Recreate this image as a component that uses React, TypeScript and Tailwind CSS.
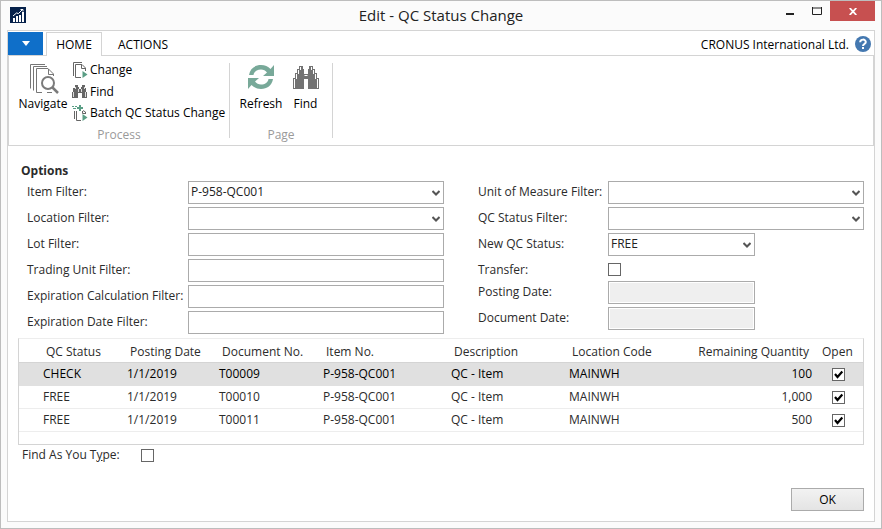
import React, { useId, useState } from 'react';

const FONT = "font-['Open_Sans','Noto_Sans',sans-serif]";

function AppLogo() {
  return (
    <svg width="16" height="16" viewBox="0 0 16 16" aria-hidden="true">
      <rect width="16" height="16" fill="#06214a" />
      <g fill="#fff">
        <rect x="3" y="11" width="2" height="4" />
        <rect x="6" y="9" width="2" height="6" />
        <rect x="9" y="8" width="2" height="7" />
        <rect x="12" y="5" width="2" height="10" />
      </g>
      <path d="M3 9 L6.5 6 L8.5 6.5 L12.5 2.5 M10.5 2.5 H13 V4.5" fill="none" stroke="#fff" strokeWidth="1" />
    </svg>
  );
}

function NavigateIcon() {
  return (
    <svg className="ml-[3px]" width="30" height="30" viewBox="0 0 30 30" fill="none" stroke="#767676" aria-hidden="true">
      <path d="M0.5 24.5 V0.5 H15 M3.5 26.5 V2.5 H17" />
      <path d="M12 28.5 H6.5 V4.5 H18 L23.5 10 V12 M18.5 5 V10.5 H23 M17 28.5 H22" />
      <circle cx="18" cy="19" r="6" stroke="#7b7b7b" strokeWidth="2" />
      <path d="M22.5 23.5 L28 29" stroke="#7b7b7b" strokeWidth="2.5" />
    </svg>
  );
}

function ChangeIcon() {
  return (
    <svg width="16" height="16" viewBox="0 0 16 16" fill="none" stroke="#666" aria-hidden="true">
      <path d="M1.5 14 V0.5 H10" />
      <path d="M9 15.5 H3.5 V2.5 H10 L13.5 6 V9 M9.5 3 V6.5 H13" />
      <path d="M10.5 9 L15.5 12.5 L10.5 16 Z" fill="#5a9e85" stroke="none" />
    </svg>
  );
}

function BatchIcon() {
  return (
    <svg width="16" height="16" viewBox="0 0 16 16" fill="none" stroke="#666" aria-hidden="true">
      <path d="M2.5 14 V6 M9 15.5 H4.5 V6 M11 5.5 L13.5 7 V9 M10.5 6 V8.5 H13" />
      <path d="M0 1.5 H2 M3 1.5 H5 M1 3.5 H4" stroke="#5a9e85" />
      <path d="M8 0 V6 M5 3 H11" stroke="#5a9e85" strokeWidth="2" />
      <path d="M10.5 9 L15.5 12.5 L10.5 16 Z" fill="#5a9e85" stroke="none" />
    </svg>
  );
}

function Binoculars() {
  return (
    <svg width="26" height="24" viewBox="0 0 26 24" aria-hidden="true">
      <path
        d="M6 0 H10 V3 H11 V8 H15 V3 H16 V0 H20 V3 H22 V7 H24 V12 H26 V23 H15 V13 H11 V23 H0 V12 H2 V7 H4 V3 H6 Z"
        fill="#737373"
      />
      <path
        d="M7.5 1 V4 M5.5 4 V8 M3.5 8 V13 M1.5 13 V22 M18.5 1 V4 M20.5 4 V8 M22.5 8 V13 M24.5 13 V22 M11.5 9.5 H14.5"
        stroke="#fff"
      />
    </svg>
  );
}

function SmallBinoculars() {
  return (
    <svg width="16" height="16" viewBox="0 0 16 16" aria-hidden="true">
      <path
        d="M3 1 H6 V3 H7 V5 H9 V3 H10 V1 H13 V4 H14 V8 H15 V14 H10 V9 H6 V14 H0 V8 H1 V4 H3 Z"
        fill="#666"
      />
      <path d="M3.5 3 V5 M1.5 8 V13 M12.5 3 V5 M13.5 8 V13 M6.5 5 V8 M9.5 5 V8" stroke="#ddd" />
    </svg>
  );
}

function RefreshIcon() {
  return (
    <svg width="26" height="26" viewBox="0 0 26 26" aria-hidden="true">
      <path d="M1 11 C2 4.5 7 1 13 1 C17 1 20 2.5 22.5 5 L26 1 V12 H15 L19 8.5 C17.5 6.8 15.5 5.5 13 5.5 C9 5.5 6 7.5 5.5 11 Z" fill="#78a999" />
      <path d="M25 15 C24 21.5 19 25 13 25 C9 25 6 23.5 3.5 21 L0 25 V14 H11 L7 17.5 C8.5 19.2 10.5 20.5 13 20.5 C17 20.5 20 18.5 20.5 15 Z" fill="#78a999" />
    </svg>
  );
}

function HelpIcon() {
  return (
    <svg width="16" height="16" viewBox="0 0 16 16" aria-hidden="true">
      <circle cx="8" cy="8" r="8" fill="#4478b0" />
      <path d="M5.2 6.2 C5.2 2.8 10.8 2.8 10.8 6 C10.8 8 8 8 8 10" fill="none" stroke="#fff" strokeWidth="2" />
      <rect x="7" y="11" width="2" height="2" fill="#fff" />
    </svg>
  );
}

const fieldBox = 'h-[23px] w-full appearance-none rounded-none border border-[#ababab] bg-white px-[2px] pb-[2px] text-xs leading-4 text-[#222] outline-none';

type FieldProps = {
  label: string;
  kind?: 'text' | 'select' | 'disabled';
  value?: string;
  labelClass: string;
  boxClass?: string;
};

function Field({ label, kind = 'text', value = '', labelClass, boxClass = 'flex-1' }: FieldProps) {
  const id = useId();
  return (
    <div className="flex h-[23px] items-center">
      <label htmlFor={id} className={`shrink-0 pb-[2px] whitespace-nowrap ${labelClass}`}>
        {label}
      </label>
      <div className={`relative ${boxClass}`}>
        {kind === 'select' ? (
          <>
            <select id={id} defaultValue={value} className={`${fieldBox} block`}>
              <option value={value}>{value}</option>
            </select>
            <svg className="pointer-events-none absolute top-[9px] right-[4px]" width="8" height="6" viewBox="0 0 8 6" aria-hidden="true">
              <path d="M0.5 1 L4 4.5 L7.5 1" fill="none" stroke="#555" strokeWidth="2" />
            </svg>
          </>
        ) : (
          <input
            id={id}
            type="text"
            defaultValue={value}
            disabled={kind === 'disabled'}
            className={`${fieldBox} block disabled:bg-[#efefef] disabled:shadow-[inset_0_0_0_1px_#fff]`}
          />
        )}
      </div>
    </div>
  );
}

function CheckBox({ id, label, checked = false }: { id?: string; label?: string; checked?: boolean }) {
  const [on, setOn] = useState(checked);
  return (
    <span className="relative block size-[13px]">
      <input
        id={id}
        type="checkbox"
        aria-label={label}
        checked={on}
        onChange={(e) => setOn(e.target.checked)}
        className="block size-[13px] appearance-none rounded-none border border-[#666] bg-white"
      />
      {on && (
        <svg className="pointer-events-none absolute top-0 left-0" width="13" height="13" viewBox="0 0 13 13" aria-hidden="true">
          <path d="M3 6 L5.5 9 L10.3 3.5" fill="none" stroke="#000" strokeWidth="2.2" />
        </svg>
      )}
    </span>
  );
}

const rows = [
  { status: 'CHECK', date: '1/1/2019', doc: 'T00009', item: 'P-958-QC001', desc: 'QC - Item', loc: 'MAINWH', qty: '100' },
  { status: 'FREE', date: '1/1/2019', doc: 'T00010', item: 'P-958-QC001', desc: 'QC - Item', loc: 'MAINWH', qty: '1,000' },
  { status: 'FREE', date: '1/1/2019', doc: 'T00011', item: 'P-958-QC001', desc: 'QC - Item', loc: 'MAINWH', qty: '500' },
];

function TitleBar() {
  return (
    <header className="relative flex h-[29px] items-center justify-center">
      <span className="absolute top-[6px] left-[9px]">
        <AppLogo />
      </span>
      <h1 className="pb-px text-[15px] leading-5 text-[#222]">Edit - QC Status Change</h1>
      <div className="absolute top-0 right-[6px] flex h-5">
        <button type="button" aria-label="Minimize" className="flex w-[27px] items-center justify-center">
          <svg width="8" height="10" viewBox="0 0 8 10"><rect y="7" width="8" height="2" fill="#222" /></svg>
        </button>
        <button type="button" aria-label="Maximize" className="flex w-[27px] items-center justify-center">
          <svg width="10" height="8" viewBox="0 0 10 8"><path d="M0.5 0 V7.5 H9.5 V0 M0 1 H10" fill="none" stroke="#222" /></svg>
        </button>
        <button type="button" aria-label="Close" className="flex w-[45px] items-center justify-center bg-[#c75050]">
          <svg width="8" height="7" viewBox="0 0 8 7"><path d="M0.7 0 L7.3 7 M7.3 0 L0.7 7" stroke="#fff" strokeWidth="1.8" /></svg>
        </button>
      </div>
    </header>
  );
}

const smallCommand = 'flex h-[22px] items-start gap-[2px] leading-4';

function Ribbon() {
  return (
    <>
      <nav className="flex h-[25px] items-stretch border-b border-[#d4d4d4] pt-px text-black">
        <button type="button" aria-label="Application menu" className="flex w-[35px] items-center justify-center bg-[#0f6fc9]">
          <svg width="8" height="5" viewBox="0 0 8 5"><path d="M0 0 H8 L4 5 Z" fill="#fff" /></svg>
        </button>
        <button type="button" className="-mb-px ml-[3px] w-14 border border-b-0 border-[#d4d4d4] bg-white pt-px">HOME</button>
        <button type="button" className="ml-4 pt-[3px]">ACTIONS</button>
        <span className="ml-auto self-center pt-[3px]">CRONUS International Ltd.</span>
        <button type="button" aria-label="Help" className="mr-[3px] ml-[6px]">
          <HelpIcon />
        </button>
      </nav>
      <div className="flex h-[90px] border border-t-0 border-[#d4d4d4] py-[7px] text-black">
        <section className="flex w-[221px] flex-col border-r border-[#d4d4d4]">
          <div className="flex h-16 shrink-0">
            <button type="button" className="flex w-[61px] shrink-0 flex-col items-center pt-px pl-[7px]">
              <NavigateIcon />
              <span className="mt-[2px] leading-4">Navigate</span>
            </button>
            <div className="-mt-px ml-[2px] flex flex-col whitespace-nowrap">
              <button type="button" className={smallCommand}><ChangeIcon />Change</button>
              <button type="button" className={smallCommand}><SmallBinoculars />Find</button>
              <button type="button" className={smallCommand}><BatchIcon />Batch QC Status Change</button>
            </div>
          </div>
          <span className="text-center leading-4 text-[#9a9a9a]">Process</span>
        </section>
        <section className="flex w-[103px] flex-col border-r border-[#d4d4d4]">
          <div className="flex h-16 shrink-0 items-start pl-[8px]">
            <button type="button" className="flex w-[46px] flex-col items-center pt-px">
              <RefreshIcon />
              <span className="mt-[6px] leading-4">Refresh</span>
            </button>
            <button type="button" className="flex w-[43px] flex-col items-center pt-[3px]">
              <Binoculars />
              <span className="mt-[6px] leading-4">Find</span>
            </button>
          </div>
          <span className="text-center leading-4 text-[#9a9a9a]">Page</span>
        </section>
      </div>
    </>
  );
}

function OptionsForm() {
  return (
    <section className="pt-[16px]">
      <h2 className="ml-[13px] h-[19px] font-bold leading-[18px]">Options</h2>
      <div className="flex gap-[34px] pr-[10px] pl-[19px]">
        <div className="flex flex-[1_1_161px] flex-col gap-[3px]">
          <Field label="Item Filter:" kind="select" value="P-958-QC001" labelClass="w-[161px]" />
          <Field label="Location Filter:" kind="select" labelClass="w-[161px]" />
          <Field label="Lot Filter:" labelClass="w-[161px]" />
          <Field label="Trading Unit Filter:" labelClass="w-[161px]" />
          <Field label="Expiration Calculation Filter:" labelClass="w-[161px]" />
          <Field label="Expiration Date Filter:" labelClass="w-[161px]" />
        </div>
        <div className="flex flex-[1_1_130px] flex-col gap-[3px]">
          <Field label="Unit of Measure Filter:" kind="select" labelClass="w-[130px]" />
          <Field label="QC Status Filter:" kind="select" labelClass="w-[130px]" />
          <Field label="New QC Status:" kind="select" value="FREE" labelClass="w-[130px]" boxClass="w-[147px]" />
          <div className="flex h-[19px] items-center pt-[2px]">
            <label htmlFor="transfer" className="w-[130px]">Transfer:</label>
            <CheckBox id="transfer" />
          </div>
          <Field label="Posting Date:" kind="disabled" labelClass="w-[130px]" boxClass="w-[147px]" />
          <Field label="Document Date:" kind="disabled" labelClass="w-[130px]" boxClass="w-[147px]" />
        </div>
      </div>
    </section>
  );
}

function StatusTable() {
  return (
    <div className="mr-[10px] ml-[10px] border border-t-[#ededed] border-[#d4d4d4] pb-3">
      <table className="w-full table-fixed border-collapse text-left whitespace-nowrap">
        <colgroup>
          <col className="w-[105px]" />
          <col className="w-[92px]" />
          <col className="w-[104px]" />
          <col className="w-[128px]" />
          <col className="w-[118px]" />
          <col className="w-[118px]" />
          <col />
          <col className="w-[48px]" />
        </colgroup>
        <thead>
          <tr className="h-[23px] border-b border-[#d4d4d4]">
            <th className="p-0 pt-[3px] pl-[27px] font-normal">QC Status</th>
            <th className="p-0 pt-[3px] pl-[6px] font-normal">Posting Date</th>
            <th className="p-0 pt-[3px] pl-[6px] font-normal">Document No.</th>
            <th className="p-0 pt-[3px] pl-[6px] font-normal">Item No.</th>
            <th className="p-0 pt-[3px] pl-[6px] font-normal">Description</th>
            <th className="p-0 pt-[3px] pl-[6px] font-normal">Location Code</th>
            <th className="p-0 pt-[3px] pr-[6px] text-right font-normal">Remaining Quantity</th>
            <th className="p-0 pt-[3px] pl-[7px] font-normal">Open</th>
          </tr>
        </thead>
        <tbody>
          {rows.map((r, i) => (
            <tr key={r.doc} className={i === 0 ? 'h-[23px] border-b border-[#e0e0e0] bg-[#e0e0e0] text-black' : 'h-[23px] border-b border-[#ededed]'}>
              <td className="p-0 pl-6">{r.status}</td>
              <td className="p-0 pl-[3px]">{r.date}</td>
              <td className="p-0 pl-[3px]">{r.doc}</td>
              <td className="p-0 pl-[3px]">{r.item}</td>
              <td className="p-0 pl-[3px]">{r.desc}</td>
              <td className="p-0 pl-[3px]">{r.loc}</td>
              <td className="p-0 pr-[3px] text-right">{r.qty}</td>
              <td className="p-0 pt-px pl-[17px]"><CheckBox label={`Open ${r.doc}`} checked /></td>
            </tr>
          ))}
        </tbody>
      </table>
    </div>
  );
}

export default function App() {
  return (
    <div className={`flex min-h-screen flex-col border border-[#bdbdbd] bg-[#fbfbfb] px-[6px] pb-[6px] text-xs leading-4 text-[#2b2b2b] ${FONT}`}>
      <div className="-mx-[6px]">
        <TitleBar />
      </div>
      <main className="flex flex-1 flex-col border border-[#d4d4d4] bg-white">
        <Ribbon />
        <OptionsForm />
        <div className="pt-[4px]">
          <StatusTable />
        </div>
        <div className="flex h-[22px] items-center pl-[14px]">
          <label htmlFor="find-type" className="w-[119px] pb-px">Find As You T<span className="underline">y</span>pe:</label>
          <CheckBox id="find-type" />
        </div>
        <div className="mt-auto flex justify-end pr-[10px] pb-[10px]">
          <button type="button" className="h-[23px] w-[73px] border border-[#ababab] bg-linear-to-b from-[#f2f2f2] to-[#e4e4e4] text-black">OK</button>
        </div>
      </main>
    </div>
  );
}
